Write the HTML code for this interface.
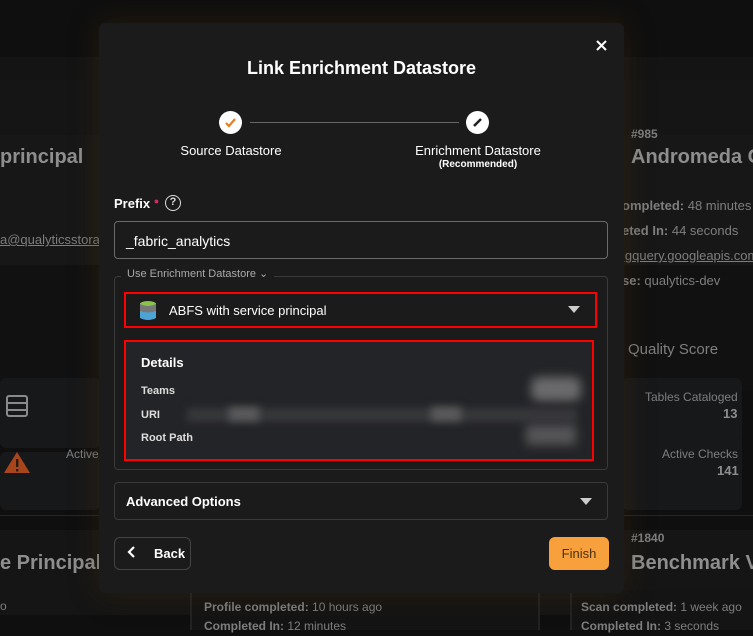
<!DOCTYPE html>
<html><head><style>
*{box-sizing:border-box;margin:0;padding:0}
body{width:753px;height:629px;overflow:hidden;background:#0f0f0f;font-family:"Liberation Sans",sans-serif;position:relative;color:#ddd}
.a{position:absolute}
.bg{color:#7e7e7e}
.bgb{color:#8e8e8e;font-weight:bold}
.modal{position:absolute;left:99px;top:23px;width:525px;height:570px;background:#1b1b1b;border-radius:6px;box-shadow:0 0 30px rgba(80,50,10,.35)}
.t{position:absolute;color:#fff}
</style></head><body>
<div class="a" style="left:0;top:57px;width:753px;height:24px;background:#141414;border-bottom:1px solid #222"></div>
<div class="a" style="left:0;top:80px;width:753px;height:185px;background:#151515"></div>
<div class="a" style="left:0;top:135px;width:753px;height:130px;background:#171717"></div>
<div class="a" style="left:0;top:265px;width:753px;height:125px;background:#111"></div>
<div class="a" style="left:0;top:378px;width:100px;height:70px;background:#17181a;border-radius:6px"></div>
<div class="a" style="left:0;top:452px;width:100px;height:58px;background:#17181a;border-radius:6px"></div>
<div class="a" style="left:622px;top:378px;width:120px;height:66px;background:#17181a;border-radius:6px"></div>
<div class="a" style="left:622px;top:438px;width:120px;height:72px;background:#17181a;border-radius:6px"></div>
<div class="a" style="left:0;top:515px;width:753px;height:1px;background:#262626"></div>
<div class="a" style="left:0;top:530px;width:753px;height:85px;background:#151515"></div>
<div class="a" style="left:190px;top:590px;width:350px;height:40px;background:#141414;border-left:2px solid #222;border-right:2px solid #222"></div>
<div class="a" style="left:570px;top:590px;width:183px;height:40px;background:#141414;border-left:2px solid #222"></div>
<div class="a bgb" style="left:0;top:146px;font-size:20px">principal</div>
<div class="a bg" style="left:0;top:232px;font-size:13px;text-decoration:underline">a@qualyticsstorag</div>
<div class="a" style="left:6px;top:395px;width:22px;height:22px;border:2px solid #8a8a8a;border-radius:3px"></div>
<div class="a" style="left:6px;top:402px;width:22px;height:2px;background:#8a8a8a"></div>
<div class="a" style="left:6px;top:409px;width:22px;height:2px;background:#8a8a8a"></div>
<svg class="a" style="left:3px;top:450px" width="28" height="24"><path d="M14 2 L27 23 H1 Z" fill="#a8451a"/><rect x="13" y="9" width="2.4" height="8" fill="#2a1a10"/><rect x="13" y="19" width="2.4" height="2.4" fill="#2a1a10"/></svg>
<div class="a bg" style="left:66px;top:447px;font-size:12px">Active</div>
<div class="a bgb" style="left:0;top:552px;font-size:20px">e Principal</div>
<div class="a bg" style="left:0;top:599px;font-size:12px">o</div>
<div class="a bg" style="left:631px;top:127px;font-size:12px;font-weight:bold">#985</div>
<div class="a bgb" style="left:631px;top:146px;font-size:20px;white-space:nowrap">Andromeda G</div>
<div class="a bg" style="left:622px;top:193px;font-size:13px;line-height:25px;white-space:nowrap"><b>ompleted:</b> 48 minutes a<br><b>eted In:</b> 44 seconds<br><u>igquery.googleapis.com</u><br><b>se:</b> qualytics-dev</div>
<div class="a bg" style="left:628px;top:341px;font-size:15px">Quality Score</div>
<div class="a bg" style="left:645px;top:390px;font-size:12px">Tables Cataloged</div>
<div class="a bgb" style="left:723px;top:406px;font-size:13px">13</div>
<div class="a bg" style="left:662px;top:447px;font-size:12px">Active Checks</div>
<div class="a bgb" style="left:717px;top:463px;font-size:13px">141</div>
<div class="a bg" style="left:631px;top:531px;font-size:12px;font-weight:bold">#1840</div>
<div class="a bgb" style="left:631px;top:552px;font-size:20px;white-space:nowrap">Benchmark Ve</div>
<div class="a bg" style="left:204px;top:598px;font-size:12px;line-height:19px"><b>Profile completed:</b> 10 hours ago<br><b>Completed In:</b> 12 minutes</div>
<div class="a bg" style="left:581px;top:598px;font-size:12px;line-height:19px;white-space:nowrap"><b>Scan completed:</b> 1 week ago<br><b>Completed In:</b> 3 seconds</div>

<div class="modal">
<div class="t" style="left:0;width:525px;text-align:center;top:35px;font-size:18px;font-weight:bold">Link Enrichment Datastore</div>
<svg class="a" style="left:497px;top:17px" width="11" height="11"><path d="M1 1 L10 10 M10 1 L1 10" stroke="#fff" stroke-width="2"/></svg>
<div class="a" style="left:151px;top:99px;width:209px;height:1px;background:#666"></div>
<div class="a" style="left:120px;top:88px;width:23px;height:23px;border-radius:50%;background:#fff"></div>
<svg class="a" style="left:124px;top:92px" width="15" height="15"><path d="M3 8 L6 11 L12 4" stroke="#e67e22" stroke-width="2.2" fill="none"/></svg>
<div class="a" style="left:367px;top:88px;width:23px;height:23px;border-radius:50%;background:#fff"></div>
<svg class="a" style="left:371px;top:92px" width="15" height="15"><path d="M4 11 L11 4" stroke="#222" stroke-width="2.6"/></svg>
<div class="t" style="left:52px;width:160px;text-align:center;top:120px;font-size:13px">Source Datastore</div>
<div class="t" style="left:299px;width:160px;text-align:center;top:120px;font-size:13px">Enrichment Datastore</div>
<div class="t" style="left:299px;width:160px;text-align:center;top:136px;font-size:10px;font-weight:bold">(Recommended)</div>
<div class="t" style="left:15px;top:173px;font-size:13px;font-weight:bold">Prefix <span style="color:#e0245e;font-size:9px;vertical-align:top">●</span></div>
<div class="a" style="left:66px;top:172px;width:16px;height:16px;border:1.6px solid #ddd;border-radius:50%;color:#ddd;font-size:11px;font-weight:bold;text-align:center;line-height:13px">?</div>
<div class="a" style="left:15px;top:198px;width:494px;height:38px;border:1px solid #6a6a6a;border-radius:4px"></div>
<div class="t" style="left:27px;top:210px;font-size:14px">_fabric_analytics</div>
<div class="a" style="left:15px;top:253px;width:494px;height:194px;border:1px solid #3a3a3a;border-radius:4px"></div>
<div class="a" style="left:22px;top:244px;padding:0 6px;background:#1b1b1b;color:#aaa;font-size:11px">Use Enrichment Datastore ⌄</div>
<div class="a" style="left:25px;top:269px;width:473px;height:36px;border:2px solid #f00"></div>
<svg class="a" style="left:40px;top:277px" width="18" height="22"><ellipse cx="9" cy="4" rx="8" ry="3" fill="#8bc34a"/><path d="M1 4 V18 Q9 22 17 18 V4 Q9 8 1 4Z" fill="#4ba3d6"/><path d="M1 4 V11 Q9 14 17 11 V4 Q9 8 1 4Z" fill="#777"/></svg>
<div class="t" style="left:70px;top:280px;font-size:13px">ABFS with service principal</div>
<svg class="a" style="left:469px;top:283px" width="12" height="8"><path d="M0 0 H12 L6 7Z" fill="#ccc"/></svg>
<div class="a" style="left:25px;top:317px;width:470px;height:121px;border:2px solid #f00;background:#232427"></div>
<div class="t" style="left:42px;top:332px;font-size:13px;font-weight:bold">Details</div>
<div class="t" style="left:42px;top:362px;font-size:11px;font-weight:bold;color:#ddd">Teams</div>
<div class="t" style="left:42px;top:386px;font-size:11px;font-weight:bold;color:#ddd">URI</div>
<div class="t" style="left:42px;top:409px;font-size:11px;font-weight:bold;color:#ddd">Root Path</div>
<div class="a" style="left:432px;top:354px;width:50px;height:24px;background:#6a6a6c;filter:blur(5px);border-radius:8px"></div>
<div class="a" style="left:88px;top:385px;width:390px;height:14px;background:#37383b;filter:blur(4px)"></div>
<div class="a" style="left:130px;top:384px;width:30px;height:14px;background:#5a5a5c;filter:blur(4px)"></div>
<div class="a" style="left:332px;top:384px;width:30px;height:14px;background:#5a5a5c;filter:blur(4px)"></div>
<div class="a" style="left:427px;top:402px;width:50px;height:20px;background:#555557;filter:blur(5px)"></div>
<div class="a" style="left:15px;top:459px;width:494px;height:38px;border:1px solid #3a3a3a;border-radius:4px"></div>
<div class="t" style="left:27px;top:471px;font-size:13px;font-weight:bold">Advanced Options</div>
<svg class="a" style="left:481px;top:475px" width="12" height="8"><path d="M0 0 H12 L6 7Z" fill="#ccc"/></svg>
<div class="a" style="left:15px;top:514px;width:77px;height:33px;border:1px solid #444;border-radius:6px"></div>
<svg class="a" style="left:28px;top:522px" width="10" height="14"><path d="M7 2 L2 7 L7 12" stroke="#fff" stroke-width="2.2" fill="none"/></svg>
<div class="t" style="left:55px;top:523px;font-size:13px;font-weight:bold">Back</div>
<div class="a" style="left:450px;top:514px;width:60px;height:33px;background:#f7a03c;border-radius:6px;color:#4a3210;font-size:13px;text-align:center;line-height:33px">Finish</div>
</div>
</body></html>
